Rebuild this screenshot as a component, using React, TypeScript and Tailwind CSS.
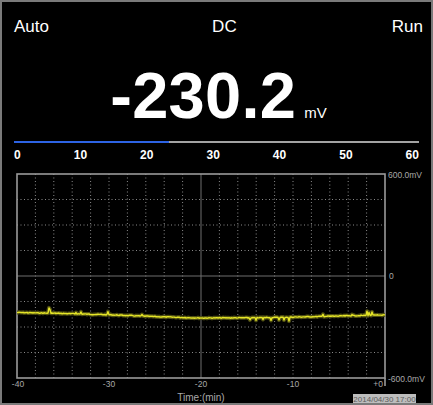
import React from "react";

const X0 = 17;
const Y0 = 174;
const X1 = 385;
const Y1 = 378;

const baseCurve: [number, number][] = [
  [17, 312.5],
  [60, 313.4],
  [110, 314.8],
  [160, 316.8],
  [200, 318],
  [250, 317.8],
  [300, 317],
  [340, 316],
  [385, 315],
];

const spikes: Record<number, number> = {
  49: -5,
  50: -4,
  76: -1.5,
  81: -2,
  108: -3,
  142: -1.5,
  250: 2,
  256: 3,
  263: 2,
  271: 3,
  279: 2.5,
  284: 3,
  289: 4,
  323: -2,
  352: -1.5,
  367: -4,
  369: -3,
  372: -3.5,
};

function baseAt(x: number) {
  for (let i = 0; i < baseCurve.length - 1; i++) {
    const [ax, ay] = baseCurve[i];
    const [bx, by] = baseCurve[i + 1];
    if (x >= ax && x <= bx) return ay + ((by - ay) * (x - ax)) / (bx - ax);
  }
  return baseCurve[baseCurve.length - 1][1];
}

function tracePoints() {
  const pts: string[] = [];
  let seed = 7;
  for (let x = X0; x <= X1; x++) {
    seed = (seed * 9301 + 49297) % 233280;
    const jitter = (seed / 233280 - 0.5) * 0.8;
    const y = baseAt(x) + jitter + (spikes[x] ?? 0);
    pts.push(`${x},${y.toFixed(1)}`);
  }
  return pts.join(" ");
}

function Chart() {
  const cols = Array.from({ length: 19 }, (_, i) => X0 + ((i + 1) * (X1 - X0)) / 20);
  const rows = Array.from({ length: 7 }, (_, i) => Y0 + ((i + 1) * (Y1 - Y0)) / 8);
  const midX = (X0 + X1) / 2;
  const midY = (Y0 + Y1) / 2;
  const pts = tracePoints();
  const label = { fontFamily: "'Liberation Sans', Arial, sans-serif" };
  return (
    <svg width={429} height={240} viewBox="2 163 429 240" className="mt-[2px] block">
      {cols
        .filter((x) => Math.abs(x - midX) > 1)
        .map((x) => (
          <line key={`c${x}`} x1={x} y1={Y0} x2={x} y2={Y1} stroke="#8a8a8a" strokeWidth={1} strokeDasharray="1 2.5" />
        ))}
      {rows
        .filter((y) => Math.abs(y - midY) > 1)
        .map((y) => (
          <line key={`r${y}`} x1={X0} y1={y} x2={X1} y2={y} stroke="#8a8a8a" strokeWidth={1} strokeDasharray="1 2.5" />
        ))}
      <line x1={midX} y1={Y0} x2={midX} y2={Y1} stroke="#6e6e6e" strokeWidth={1} />
      <line x1={X0} y1={midY} x2={X1} y2={midY} stroke="#6e6e6e" strokeWidth={1} />
      <rect x={X0} y={Y0} width={X1 - X0} height={Y1 - Y0} fill="none" stroke="#9a9a9a" strokeWidth={1.6} />
      <line x1={X1} y1={Y1} x2={X1} y2={386} stroke="#9a9a9a" strokeWidth={1.6} />
      <polyline points={pts} fill="none" stroke="#4e4e12" strokeWidth={4} strokeLinejoin="round" />
      <polyline points={pts} fill="none" stroke="#e6e628" strokeWidth={1.4} strokeLinejoin="round" />

      <g fill="#a8a8a8" fontSize={8.5} style={label}>
        <text x={388} y={178}>600.0mV</text>
        <text x={389} y={279}>0</text>
        <text x={388} y={382}>-600.0mV</text>
        <text x={18} y={387} textAnchor="middle">-40</text>
        <text x={109} y={387} textAnchor="middle">-30</text>
        <text x={201} y={387} textAnchor="middle">-20</text>
        <text x={293} y={387} textAnchor="middle">-10</text>
        <text x={383} y={387} textAnchor="end">+0</text>
        <text x={201} y={401} textAnchor="middle" fontSize={10}>Time:(min)</text>
      </g>
      <rect x={353} y={394} width={63} height={10} fill="#bdbdbd" />
      <text x={384.5} y={402} textAnchor="middle" fontSize={8} fill="#5c5c5c" style={label}>
        2014/04/30 17:00
      </text>
    </svg>
  );
}

export default function App() {
  const scale = ["0", "10", "20", "30", "40", "50", "60"];
  return (
    <div className="box-border h-[405px] w-[433px] overflow-hidden border-2 border-[#7a7a7a] bg-black font-['Liberation_Sans',Arial,sans-serif] text-white">
      <div className="flex items-start justify-between pl-[12px] pr-[8px] pt-[16px] text-[17px] leading-[17px]">
        <span>Auto</span>
        <span className="pl-[8px]">DC</span>
        <span>Run</span>
      </div>

      <div className="mt-[29px] flex items-baseline justify-center gap-[8px] pl-[4px]">
        <span className="text-[65px] font-bold leading-[64px] tracking-[0.3px]">-230.2</span>
        <span className="text-[15px] leading-[15px]">mV</span>
      </div>

      <div className="mx-[12px] mt-[13px] flex h-[2px]">
        <div className="h-full w-[155px] bg-[#2d63e4]" />
        <div className="h-full flex-1 bg-[#a3a3a3]" />
      </div>

      <div className="mx-[12px] mt-[6px] flex justify-between text-[12px] font-bold leading-[12px]">
        {scale.map((s) => (
          <span key={s}>{s}</span>
        ))}
      </div>

      <Chart />
    </div>
  );
}
